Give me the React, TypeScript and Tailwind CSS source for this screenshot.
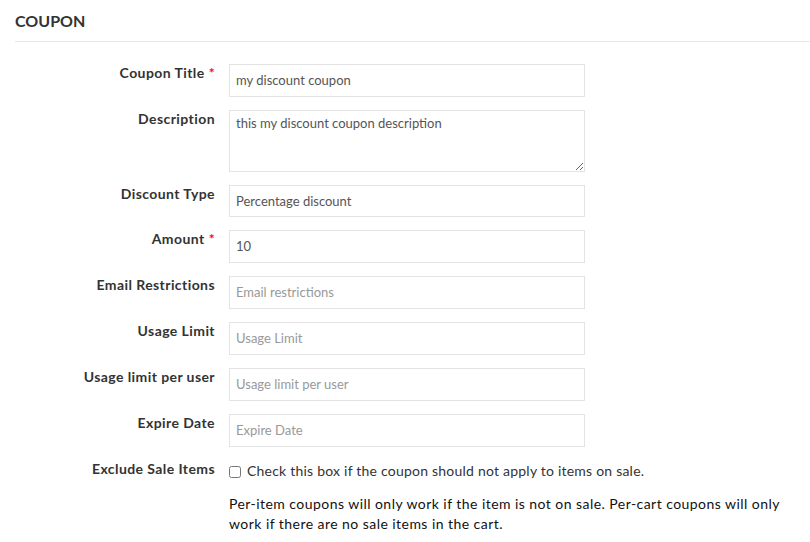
import type { ReactNode } from "react"

const inputCls =
    "ml-[14px] w-[356px] h-[33px] border border-[#e3e3e3] bg-white px-[6px] pb-[1px] text-[13px] text-[#555] placeholder:text-[#999] outline-none"

const labelCls = "w-[215px] shrink-0 text-right text-[14px] font-bold leading-[18px] tracking-[0.42px] text-[#333]"

function Row({ label, required, children }: { label: string; required?: boolean; children: ReactNode }) {
    return (
        <div className="flex items-start mb-[13px]">
            <label className={labelCls}>
                {label}
                {required && <span className="ml-[4px] text-[#e8112d]">*</span>}
            </label>
            {children}
        </div>
    )
}

export default function App() {
    return (
        <div
            className="min-h-screen w-[810px] bg-white"
            style={{ fontFamily: "Lato, 'Open Sans', sans-serif" }}
        >
            <div className="ml-[15px] h-[42px] border-b border-[#e8e8e8] pt-[11px]">
                <h2 className="text-[16px] font-bold leading-[20px] text-[#333]">COUPON</h2>
            </div>

            <form className="pt-[22px]">
                <Row label="Coupon Title" required>
                    <input className={inputCls} defaultValue="my discount coupon" />
                </Row>
                <Row label="Description">
                    <textarea
                        className="ml-[14px] w-[356px] h-[62px] border border-[#e3e3e3] bg-white px-[6px] pt-[3px] text-[13px] leading-[18px] text-[#555] outline-none"
                        defaultValue="this my discount coupon description"
                    />
                </Row>
                <Row label="Discount Type">
                    <input
                        className="ml-[14px] w-[356px] h-[32px] border border-[#e3e3e3] bg-white px-[6px] text-[13px] text-[#555] outline-none"
                        defaultValue="Percentage discount"
                    />
                </Row>
                <Row label="Amount" required>
                    <input className={inputCls} defaultValue="10" />
                </Row>
                <Row label="Email Restrictions">
                    <input className={inputCls} placeholder="Email restrictions" />
                </Row>
                <Row label="Usage Limit">
                    <input className={inputCls} placeholder="Usage Limit" />
                </Row>
                <Row label="Usage limit per user">
                    <input className={inputCls} placeholder="Usage limit per user" />
                </Row>
                <Row label="Expire Date">
                    <input className={inputCls} placeholder="Expire Date" />
                </Row>

                <div className="flex items-start">
                    <label className={labelCls}>Exclude Sale Items</label>
                    <div className="ml-[14px] w-[560px]">
                        <label className="flex items-center pt-[1px] text-[14px] leading-[20px] tracking-[0.22px] text-[#333]">
                            <input type="checkbox" className="mr-[6px] h-[12px] w-[12px] mt-[2px]" />
                            Check this box if the coupon should not apply to items on sale.
                        </label>
                        <p className="mt-[13px] text-[14px] leading-[20px] tracking-[0.45px] text-[#111]">
                            Per-item coupons will only work if the item is not on sale. Per-cart coupons will only work if there are no sale items in the cart.
                        </p>
                    </div>
                </div>
            </form>
        </div>
    )
}
